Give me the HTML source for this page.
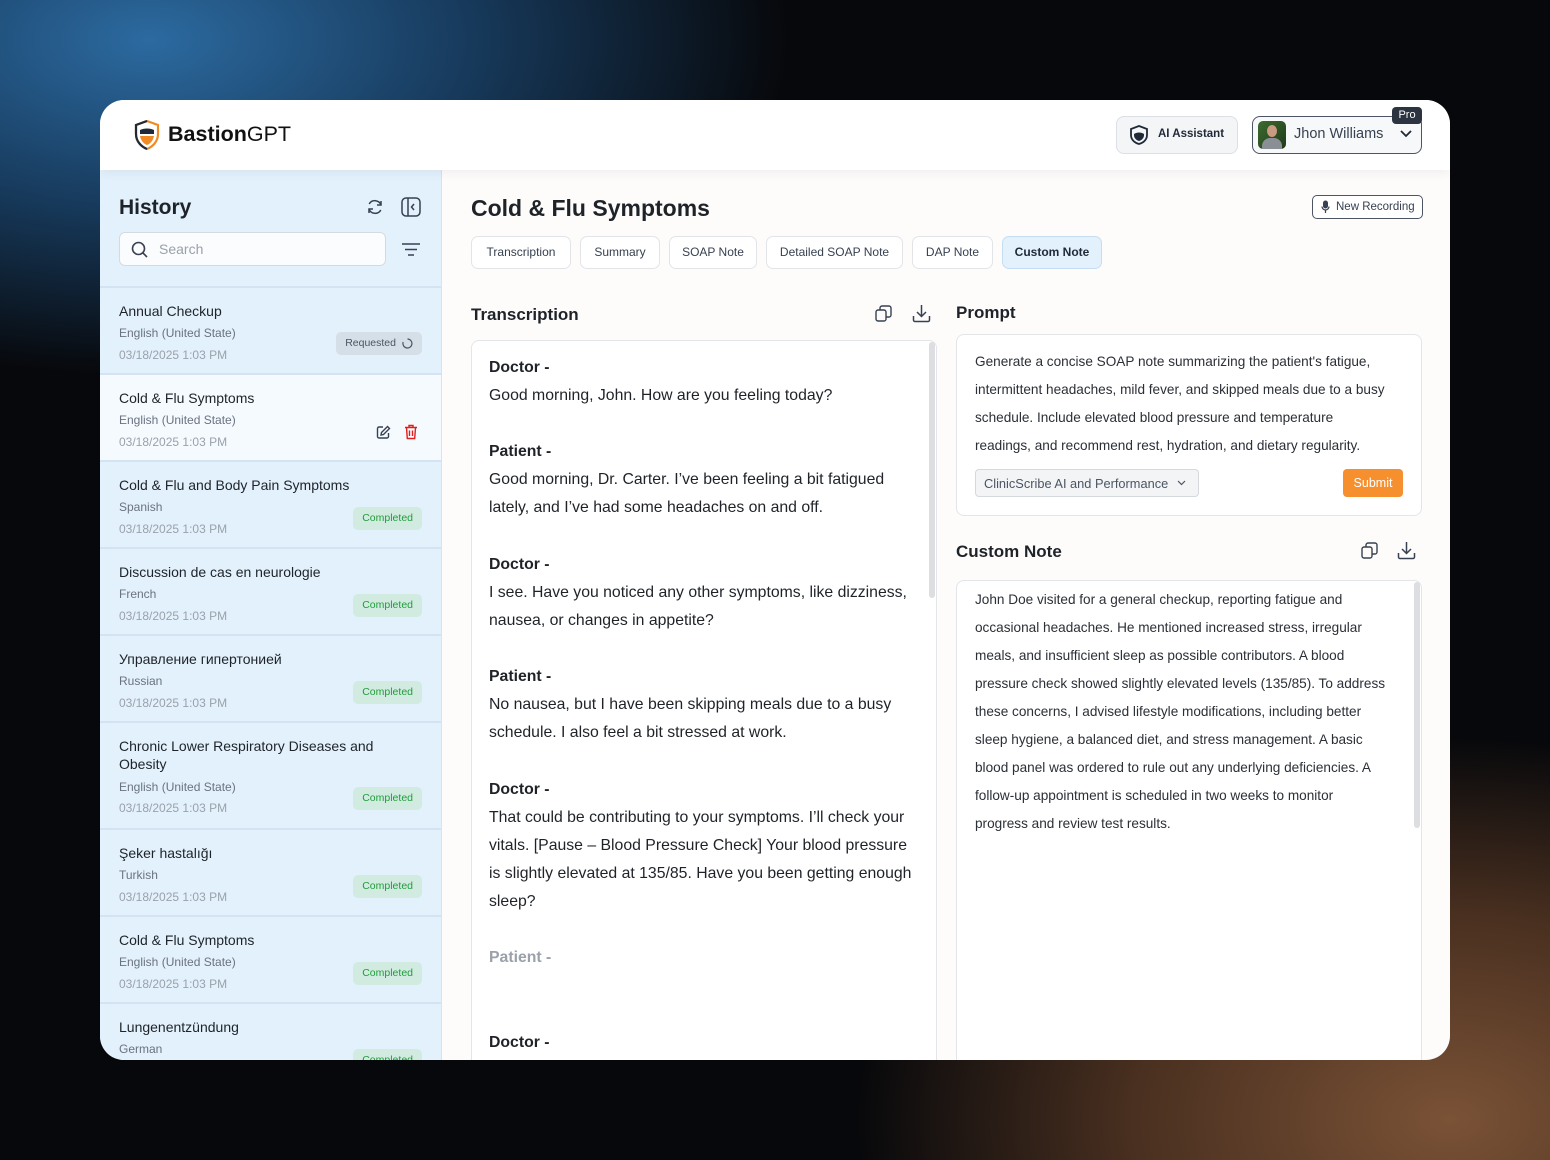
<!DOCTYPE html>
<html><head><meta charset="utf-8">
<style>
*{box-sizing:border-box;margin:0;padding:0}
body{width:1550px;height:1160px;overflow:hidden;font-family:"Liberation Sans",sans-serif;position:relative;
background:radial-gradient(ellipse 800px 420px at 150px 40px,#2c6aa0 0%,#173a5c 40%,rgba(10,15,25,0) 80%),radial-gradient(ellipse 700px 450px at 1450px 1120px,#7a5236 0%,#4a3020 45%,rgba(10,10,12,0) 85%),#07080b;}
.a{position:absolute}
.card{position:absolute;left:100px;top:100px;width:1350px;height:960px;border-radius:24px;overflow:hidden;background:#fdfcfb}
.hdr{position:absolute;left:0;top:0;width:1350px;height:70px;background:#fff;box-shadow:0 4px 10px rgba(0,0,0,.05);z-index:2}
.side{position:absolute;left:0;top:70px;width:342px;height:890px;background:#e3f1fd;border-right:1px solid #d9e3ec}
.item{position:absolute;left:0;width:341px;border-top:2px solid #d3e3f1}
.t{position:absolute;left:19px;font-size:14px;color:#1e2329}
.l{position:absolute;left:19px;font-size:12px;color:#6b7280}
.d{position:absolute;left:19px;font-size:12px;color:#9aa1ab}
.badge{position:absolute;right:19px;height:23px;border-radius:5px;font-size:10.5px;line-height:23px;padding:0 9px}
.comp{background:#d2ebe1;color:#1f9d3a}
.tab{position:absolute;top:136px;height:33px;border:1px solid #e2e4e7;border-radius:7px;background:#fff;font-size:12px;color:#374151;line-height:31px;text-align:center}
.tx{position:absolute;left:389px;font-size:15.8px;color:#1f2328;white-space:nowrap}
.tb{font-weight:bold}
.cn{position:absolute;left:875px;font-size:13.6px;color:#2b2f36;white-space:nowrap}
</style></head><body>
<div class="card">
<div class="hdr">
 <svg class="a" style="left:34px;top:20px" width="26" height="30" viewBox="0 0 26 30"><path d="M13 1 L24 5 V14 C24 22 18 27 13 29 C8 27 2 22 2 14 V5 Z" fill="none" stroke="#f08a24" stroke-width="2.2"/><path d="M13 1 L2 5 V14 C2 22 8 27 13 29" fill="none" stroke="#1f2937" stroke-width="2.2"/><path d="M6 10 C10 8 16 8 20 10 V14 H6Z" fill="#1f2937"/><path d="M6 16 H20 C19 21 16 24 13 25 C10 24 7 21 6 16Z" fill="#f08a24"/></svg>
 <div class="a" style="left:68px;top:22px;font-size:21.5px;color:#111"><b>Bastion</b>GPT</div>
 <div class="a" style="left:1016px;top:16px;width:122px;height:38px;border:1px solid #dcdfe3;border-radius:8px;background:#f4f5f7"></div>
 <svg class="a" style="left:1030px;top:25px" width="18" height="20" viewBox="0 0 18 20"><path d="M9 1 L17 4 V10 C17 15 13 18 9 19 C5 18 1 15 1 10 V4Z" fill="none" stroke="#1f2937" stroke-width="1.8"/><path d="M4 9 C7 7 11 7 14 9 V10 C14 13 12 15 9 16 C6 15 4 13 4 10Z" fill="#1f2937"/></svg>
 <div class="a" style="left:1058px;top:28px;font-size:11.5px;font-weight:bold;color:#1f2937">AI Assistant</div>
 <div class="a" style="left:1152px;top:16px;width:170px;height:38px;border:1.5px solid #4b5563;border-radius:8px;background:#f7f8f9"></div>
 <div class="a" style="left:1158px;top:21px;width:28px;height:28px;border-radius:5px;background:linear-gradient(135deg,#3d6b2f,#1f3a1a);overflow:hidden"><div class="a" style="left:9px;top:4px;width:10px;height:12px;border-radius:50%;background:#c99b80"></div><div class="a" style="left:4px;top:17px;width:20px;height:14px;border-radius:8px 8px 0 0;background:#8a8f95"></div></div>
 <div class="a" style="left:1194px;top:26px;font-size:14.5px;color:#374151">Jhon Williams</div>
 <svg class="a" style="left:1300px;top:30px" width="12" height="8" viewBox="0 0 12 8"><path d="M1 1 L6 6 L11 1" fill="none" stroke="#1f2937" stroke-width="1.8"/></svg>
 <div class="a" style="left:1292px;top:7px;width:30px;height:17px;background:#2b3440;border-radius:4px;color:#fff;font-size:11px;text-align:center;line-height:17px">Pro</div>
</div>
<div class="side">
 <div class="a" style="left:19px;top:26px;font-size:21px;font-weight:bold;color:#1e2329">History</div>
 <svg class="a" style="left:266px;top:28px" width="18" height="18" viewBox="0 0 18 18"><path d="M15 7 A6.5 6.5 0 0 0 3.2 6 M3 11 A6.5 6.5 0 0 0 14.8 12" fill="none" stroke="#374151" stroke-width="1.5"/><path d="M15 3 V7 H11 M3 15 V11 H7" fill="none" stroke="#374151" stroke-width="1.5"/></svg>
 <svg class="a" style="left:301px;top:27px" width="20" height="20" viewBox="0 0 20 20"><rect x="1" y="1" width="18" height="18" rx="4" fill="none" stroke="#374151" stroke-width="1.5"/><path d="M7 1 V19 M13 7 L10.5 10 L13 13" fill="none" stroke="#374151" stroke-width="1.5"/></svg>
 <div class="a" style="left:19px;top:62px;width:267px;height:34px;border:1px solid #d5dae0;border-radius:6px;background:#fbfcfd"></div>
 <svg class="a" style="left:31px;top:71px" width="17" height="17" viewBox="0 0 17 17"><circle cx="7.5" cy="7.5" r="6" fill="none" stroke="#374151" stroke-width="1.6"/><path d="M12 12 L16 16" stroke="#374151" stroke-width="1.6"/></svg>
 <div class="a" style="left:59px;top:71px;font-size:14px;color:#9aa1ab">Search</div>
 <svg class="a" style="left:302px;top:73px" width="18" height="13" viewBox="0 0 18 13"><path d="M0 1H18M3 6.5H15M6 12H12" stroke="#374151" stroke-width="1.6"/></svg>

 <div class="item" style="top:116px;height:87px"><div class="t" style="top:15px">Annual Checkup</div><div class="l" style="top:38px">English (United State)</div><div class="d" style="top:60px">03/18/2025 1:03 PM</div><div class="badge" style="top:44px;background:#d5dfe8;color:#4b5563;padding-right:26px">Requested<svg class="a" style="right:9px;top:6px" width="11" height="11" viewBox="0 0 11 11"><path d="M5.5 1 A4.5 4.5 0 1 1 1.2 4" fill="none" stroke="#4b5563" stroke-width="1.2"/></svg></div></div>
 <div class="item" style="top:203px;height:87px;background:#f5faff"><div class="t" style="top:15px">Cold &amp; Flu Symptoms</div><div class="l" style="top:38px">English (United State)</div><div class="d" style="top:60px">03/18/2025 1:03 PM</div>
  <svg class="a" style="left:276px;top:50px" width="15" height="15" viewBox="0 0 15 15"><path d="M7 2H3a1.5 1.5 0 0 0-1.5 1.5v8A1.5 1.5 0 0 0 3 13h8a1.5 1.5 0 0 0 1.5-1.5V8" fill="none" stroke="#374151" stroke-width="1.4"/><path d="M11.5 1.5 L13.5 3.5 L7.5 9.5 L5 10 L5.5 7.5Z" fill="none" stroke="#374151" stroke-width="1.4"/></svg>
  <svg class="a" style="left:304px;top:49px" width="14" height="16" viewBox="0 0 14 16"><path d="M1 3.5H13M5 3.5V1.5H9V3.5M2.5 3.5L3.3 14.5H10.7L11.5 3.5M5.5 6.5V12M8.5 6.5V12" fill="none" stroke="#e11d1d" stroke-width="1.4"/></svg></div>
 <div class="item" style="top:290px;height:87px"><div class="t" style="top:15px">Cold &amp; Flu and Body Pain Symptoms</div><div class="l" style="top:38px">Spanish</div><div class="d" style="top:60px">03/18/2025 1:03 PM</div><div class="badge comp" style="top:45px">Completed</div></div>
 <div class="item" style="top:377px;height:87px"><div class="t" style="top:15px">Discussion de cas en neurologie</div><div class="l" style="top:38px">French</div><div class="d" style="top:60px">03/18/2025 1:03 PM</div><div class="badge comp" style="top:45px">Completed</div></div>
 <div class="item" style="top:464px;height:87px"><div class="t" style="top:15px">Управление гипертонией</div><div class="l" style="top:38px">Russian</div><div class="d" style="top:60px">03/18/2025 1:03 PM</div><div class="badge comp" style="top:45px">Completed</div></div>
 <div class="item" style="top:551px;height:107px"><div class="t" style="top:14px;line-height:18px;width:280px">Chronic Lower Respiratory Diseases and Obesity</div><div class="l" style="top:57px">English (United State)</div><div class="d" style="top:78px">03/18/2025 1:03 PM</div><div class="badge comp" style="top:64px">Completed</div></div>
 <div class="item" style="top:658px;height:87px"><div class="t" style="top:15px">Şeker hastalığı</div><div class="l" style="top:38px">Turkish</div><div class="d" style="top:60px">03/18/2025 1:03 PM</div><div class="badge comp" style="top:45px">Completed</div></div>
 <div class="item" style="top:745px;height:87px"><div class="t" style="top:15px">Cold &amp; Flu Symptoms</div><div class="l" style="top:38px">English (United State)</div><div class="d" style="top:60px">03/18/2025 1:03 PM</div><div class="badge comp" style="top:45px">Completed</div></div>
 <div class="item" style="top:832px;height:87px"><div class="t" style="top:15px">Lungenentzündung</div><div class="l" style="top:38px">German</div><div class="badge comp" style="top:45px">Completed</div></div>
</div>

<div class="a" style="left:371px;top:95px;font-size:23px;font-weight:bold;color:#1e2329">Cold &amp; Flu Symptoms</div>
<div class="a" style="left:1212px;top:95px;width:111px;height:24px;border:1.5px solid #4b5563;border-radius:5px;background:#fff"></div>
<svg class="a" style="left:1221px;top:100px" width="9" height="14" viewBox="0 0 9 14"><rect x="2" y="0.5" width="5" height="8" rx="2.5" fill="#374151"/><path d="M1 6.5a3.5 3.5 0 0 0 7 0M4.5 10v3" fill="none" stroke="#374151" stroke-width="1.2"/></svg>
<div class="a" style="left:1236px;top:101px;font-size:11.5px;color:#374151">New Recording</div>

<div class="tab" style="left:371px;width:100px">Transcription</div>
<div class="tab" style="left:480px;width:80px">Summary</div>
<div class="tab" style="left:569px;width:88px">SOAP Note</div>
<div class="tab" style="left:666px;width:137px">Detailed SOAP Note</div>
<div class="tab" style="left:812px;width:81px">DAP Note</div>
<div class="tab" style="left:902px;width:100px;background:#e3f1fd;border-color:#c5ddf3;font-weight:bold;color:#1f2937">Custom Note</div>

<div class="a" style="left:371px;top:205px;font-size:17px;font-weight:bold;color:#1e2329">Transcription</div>
<svg class="a" style="left:775px;top:205px" width="17" height="17" viewBox="0 0 17 17"><rect x="1" y="5" width="10" height="11" rx="2" fill="none" stroke="#374151" stroke-width="1.4"/><path d="M5 5V3a2 2 0 0 1 2-2h7a2 2 0 0 1 2 2v7a2 2 0 0 1-2 2h-3" fill="none" stroke="#374151" stroke-width="1.4"/></svg>
<svg class="a" style="left:812px;top:204px" width="19" height="19" viewBox="0 0 19 19"><path d="M9.5 1V12M5 8l4.5 4.5L14 8M1.5 12v4a1.5 1.5 0 0 0 1.5 1.5h13a1.5 1.5 0 0 0 1.5-1.5v-4" fill="none" stroke="#374151" stroke-width="1.5"/></svg>
<div class="a" style="left:371px;top:240px;width:466px;height:740px;border:1px solid #e3e5e8;border-radius:8px;background:#fff"></div>
<div class="a" style="left:829px;top:242px;width:6px;height:256px;border-radius:3px;background:#dcdee1"></div>
<div class="tx tb" style="top:259px">Doctor -</div>
<div class="tx" style="top:287px">Good morning, John. How are you feeling today?</div>
<div class="tx tb" style="top:343px">Patient -</div>
<div class="tx" style="top:371px">Good morning, Dr. Carter. I’ve been feeling a bit fatigued</div>
<div class="tx" style="top:399px">lately, and I’ve had some headaches on and off.</div>
<div class="tx tb" style="top:456px">Doctor -</div>
<div class="tx" style="top:484px">I see. Have you noticed any other symptoms, like dizziness,</div>
<div class="tx" style="top:512px">nausea, or changes in appetite?</div>
<div class="tx tb" style="top:568px">Patient -</div>
<div class="tx" style="top:596px">No nausea, but I have been skipping meals due to a busy</div>
<div class="tx" style="top:624px">schedule. I also feel a bit stressed at work.</div>
<div class="tx tb" style="top:681px">Doctor -</div>
<div class="tx" style="top:709px">That could be contributing to your symptoms. I’ll check your</div>
<div class="tx" style="top:737px">vitals. [Pause – Blood Pressure Check] Your blood pressure</div>
<div class="tx" style="top:765px">is slightly elevated at 135/85. Have you been getting enough</div>
<div class="tx" style="top:793px">sleep?</div>
<div class="tx tb" style="top:849px;color:#9aa1ab">Patient -</div>
<div class="tx tb" style="top:934px">Doctor -</div>

<div class="a" style="left:856px;top:203px;font-size:17px;font-weight:bold;color:#1e2329">Prompt</div>
<div class="a" style="left:856px;top:234px;width:466px;height:182px;border:1px solid #e3e5e8;border-radius:8px;background:#fff"></div>
<div class="cn" style="top:254px">Generate a concise SOAP note summarizing the patient's fatigue,</div>
<div class="cn" style="top:282px">intermittent headaches, mild fever, and skipped meals due to a busy</div>
<div class="cn" style="top:310px">schedule. Include elevated blood pressure and temperature</div>
<div class="cn" style="top:338px">readings, and recommend rest, hydration, and dietary regularity.</div>
<div class="a" style="left:875px;top:369px;width:224px;height:28px;border:1px solid #d5d8dc;border-radius:4px;background:#f3f4f6"></div>
<div class="a" style="left:884px;top:376px;font-size:12.8px;color:#4b5563">ClinicScribe AI and Performance</div>
<svg class="a" style="left:1077px;top:380px" width="9" height="6" viewBox="0 0 9 6"><path d="M1 1L4.5 4.5L8 1" fill="none" stroke="#4b5563" stroke-width="1.2"/></svg>
<div class="a" style="left:1243px;top:369px;width:60px;height:28px;border-radius:4px;background:#f6902f;color:#fff;font-size:12.5px;text-align:center;line-height:28px">Submit</div>

<div class="a" style="left:856px;top:442px;font-size:17px;font-weight:bold;color:#1e2329">Custom Note</div>
<svg class="a" style="left:1261px;top:442px" width="17" height="17" viewBox="0 0 17 17"><rect x="1" y="5" width="10" height="11" rx="2" fill="none" stroke="#374151" stroke-width="1.4"/><path d="M5 5V3a2 2 0 0 1 2-2h7a2 2 0 0 1 2 2v7a2 2 0 0 1-2 2h-3" fill="none" stroke="#374151" stroke-width="1.4"/></svg>
<svg class="a" style="left:1297px;top:441px" width="19" height="19" viewBox="0 0 19 19"><path d="M9.5 1V12M5 8l4.5 4.5L14 8M1.5 12v4a1.5 1.5 0 0 0 1.5 1.5h13a1.5 1.5 0 0 0 1.5-1.5v-4" fill="none" stroke="#374151" stroke-width="1.5"/></svg>
<div class="a" style="left:856px;top:480px;width:466px;height:500px;border:1px solid #e3e5e8;border-radius:8px;background:#fff"></div>
<div class="a" style="left:1314px;top:482px;width:6px;height:246px;border-radius:3px;background:#dcdee1"></div>
<div class="cn" style="top:492px">John Doe visited for a general checkup, reporting fatigue and</div>
<div class="cn" style="top:520px">occasional headaches. He mentioned increased stress, irregular</div>
<div class="cn" style="top:548px">meals, and insufficient sleep as possible contributors. A blood</div>
<div class="cn" style="top:576px">pressure check showed slightly elevated levels (135/85). To address</div>
<div class="cn" style="top:604px">these concerns, I advised lifestyle modifications, including better</div>
<div class="cn" style="top:632px">sleep hygiene, a balanced diet, and stress management. A basic</div>
<div class="cn" style="top:660px">blood panel was ordered to rule out any underlying deficiencies. A</div>
<div class="cn" style="top:688px">follow-up appointment is scheduled in two weeks to monitor</div>
<div class="cn" style="top:716px">progress and review test results.</div>
</div>
</body></html>
